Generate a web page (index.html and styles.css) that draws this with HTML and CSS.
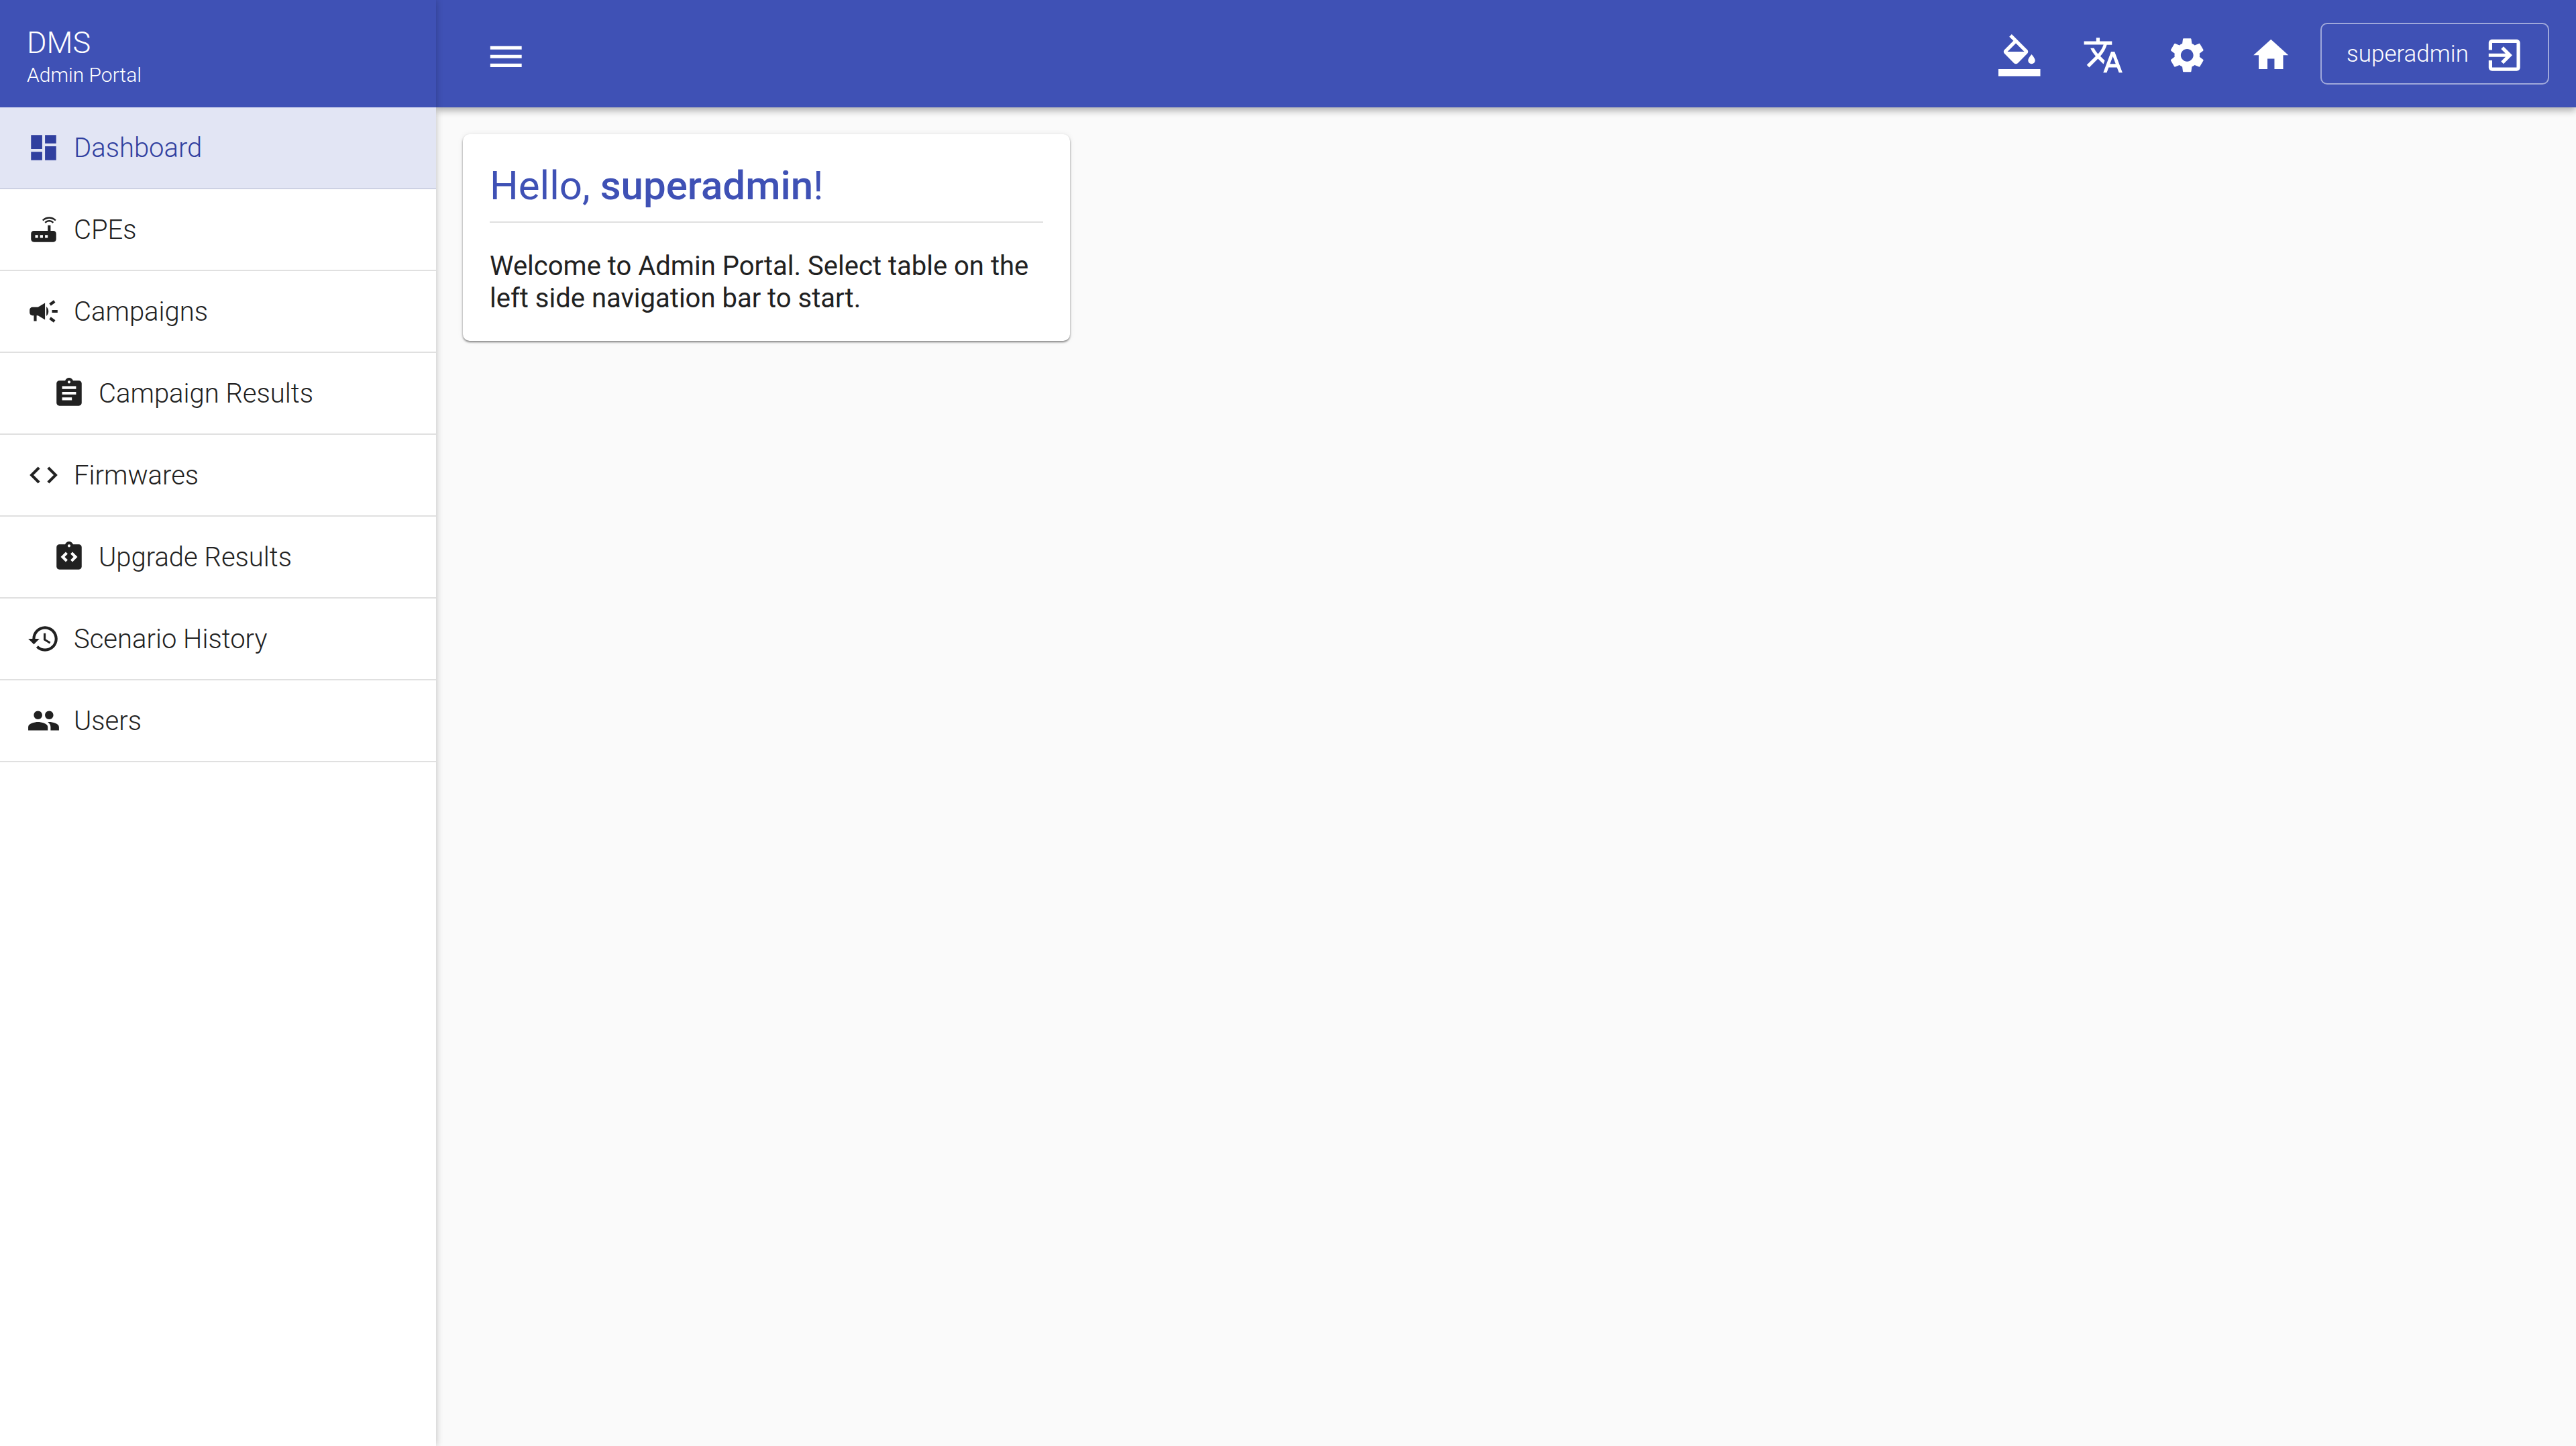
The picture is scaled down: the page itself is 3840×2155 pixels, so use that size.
FILE: index.html
```html
<!DOCTYPE html>
<html lang="en">
<head>
    <meta charset="UTF-8">
    <title>DMS Admin Portal</title>
    <link rel="stylesheet" href="styles.css">
</head>
<body>
    <aside class="sidebar">
        <div class="brand">
            <div class="brand-name">DMS</div>
            <div class="brand-sub">Admin Portal</div>
        </div>
        <nav class="nav">
            <a class="nav-item active">
                <svg class="nav-icon" viewBox="0 0 24 24"><path d="M3 13h8V3H3v10zm0 8h8v-6H3v6zm10 0h8V11h-8v10zm0-18v6h8V3h-8z"/></svg>
                <span>Dashboard</span>
            </a>
            <a class="nav-item">
                <svg class="nav-icon" viewBox="0 0 24 24"><path d="M20.2 5.9l.8-.8C19.6 3.7 17.8 3 16 3s-3.6.7-5 2.1l.8.8C13 4.8 14.5 4.2 16 4.2s3 .6 4.2 1.7zm-.9.8c-.9-.9-2.1-1.4-3.3-1.4s-2.4.5-3.3 1.4l.8.8c.7-.7 1.6-1 2.5-1 .9 0 1.8.3 2.5 1l.8-.8zM19 13h-2V9h-2v4H5c-1.1 0-2 .9-2 2v4c0 1.1.9 2 2 2h14c1.1 0 2-.9 2-2v-4c0-1.1-.9-2-2-2zM8 18H6v-2h2v2zm3.5 0h-2v-2h2v2zm3.5 0h-2v-2h2v2z"/></svg>
                <span>CPEs</span>
            </a>
            <a class="nav-item">
                <svg class="nav-icon" viewBox="0 0 24 24"><path d="M18 11v2h4v-2h-4zm-2 6.61c.96.71 2.21 1.65 3.2 2.39.4-.53.8-1.07 1.2-1.6-.99-.74-2.24-1.68-3.2-2.4-.4.54-.8 1.08-1.2 1.61zM20.4 5.6c-.4-.53-.8-1.07-1.2-1.6-.99.74-2.24 1.68-3.2 2.4.4.53.8 1.07 1.2 1.6.96-.72 2.21-1.65 3.2-2.4zM4 9c-1.1 0-2 .9-2 2v2c0 1.1.9 2 2 2h1v4h2v-4h1l5 3V6L8 9H4zm11.5 3c0-1.33-.58-2.53-1.5-3.35v6.69c.92-.81 1.5-2.01 1.5-3.34z"/></svg>
                <span>Campaigns</span>
            </a>
            <a class="nav-item sub">
                <svg class="nav-icon" viewBox="0 0 24 24"><path d="M19 3h-4.18C14.4 1.84 13.3 1 12 1c-1.3 0-2.4.84-2.82 2H5c-1.1 0-2 .9-2 2v14c0 1.1.9 2 2 2h14c1.1 0 2-.9 2-2V5c0-1.1-.9-2-2-2zm-7 0c.55 0 1 .45 1 1s-.45 1-1 1-1-.45-1-1 .45-1 1-1zm2 14H7v-2h7v2zm3-4H7v-2h10v2zm0-4H7V7h10v2z"/></svg>
                <span>Campaign Results</span>
            </a>
            <a class="nav-item">
                <svg class="nav-icon" viewBox="0 0 24 24"><path d="M9.4 16.6L4.8 12l4.6-4.6L8 6l-6 6 6 6 1.4-1.4zm5.2 0l4.6-4.6-4.6-4.6L16 6l6 6-6 6-1.4-1.4z"/></svg>
                <span>Firmwares</span>
            </a>
            <a class="nav-item sub">
                <svg class="nav-icon" viewBox="0 0 24 24"><path fill-rule="evenodd" d="M19 3h-4.18C14.4 1.84 13.3 1 12 1c-1.3 0-2.4.84-2.82 2H5c-1.1 0-2 .9-2 2v14c0 1.1.9 2 2 2h14c1.1 0 2-.9 2-2V5c0-1.1-.9-2-2-2zm-7 0c.55 0 1 .45 1 1s-.45 1-1 1-1-.45-1-1 .45-1 1-1zM11 14.17L9.59 15.59 6 12l3.59-3.59L11 9.83 8.83 12zM13 14.17l1.41 1.42L18 12l-3.59-3.59L13 9.83 15.17 12z"/></svg>
                <span>Upgrade Results</span>
            </a>
            <a class="nav-item">
                <svg class="nav-icon" viewBox="0 0 24 24"><path d="M13 3c-4.97 0-9 4.03-9 9H1l3.89 3.89.07.14L9 12H6c0-3.87 3.13-7 7-7s7 3.13 7 7-3.13 7-7 7c-1.93 0-3.68-.79-4.94-2.06l-1.42 1.42C8.27 19.99 10.51 21 13 21c4.97 0 9-4.03 9-9s-4.03-9-9-9zm-1 5v5l4.28 2.54.72-1.21-3.5-2.08V8H12z"/></svg>
                <span>Scenario History</span>
            </a>
            <a class="nav-item">
                <svg class="nav-icon" viewBox="0 0 24 24"><path d="M16 11c1.66 0 2.99-1.34 2.99-3S17.66 5 16 5c-1.66 0-3 1.34-3 3s1.34 3 3 3zm-8 0c1.66 0 2.99-1.34 2.99-3S9.66 5 8 5C6.34 5 5 6.34 5 8s1.34 3 3 3zm0 2c-2.33 0-7 1.17-7 3.5V19h14v-2.5c0-2.33-4.67-3.5-7-3.5zm8 0c-.29 0-.62.02-.97.05 1.16.84 1.97 1.97 1.97 3.45V19h6v-2.5c0-2.33-4.67-3.5-7-3.5z"/></svg>
                <span>Users</span>
            </a>
        </nav>
    </aside>

    <div class="main">
        <header class="topbar">
            <button class="icon-btn menu-btn">
                <svg viewBox="0 0 24 24"><path d="M3 18h18v-2H3v2zm0-5h18v-2H3v2zm0-7v2h18V6H3z"/></svg>
            </button>
            <div class="spacer"></div>
            <button class="icon-btn">
                <svg viewBox="0 0 24 24"><path d="M16.56 8.94L7.62 0 6.21 1.41l2.38 2.38-5.15 5.15c-.59.59-.59 1.54 0 2.12l5.5 5.5c.29.29.68.44 1.06.44s.77-.15 1.06-.44l5.5-5.5c.59-.58.59-1.53 0-2.12zM5.21 10L10 5.21 14.79 10H5.21zM19 11.5s-2 2.17-2 3.5c0 1.1.9 2 2 2s2-.9 2-2c0-1.33-2-3.5-2-3.5z"/><path d="M0 20h24v4H0z"/></svg>
            </button>
            <button class="icon-btn">
                <svg viewBox="0 0 24 24"><path d="M12.87 15.07l-2.54-2.51.03-.03c1.74-1.94 2.98-4.17 3.71-6.53H17V4h-7V2H8v2H1v1.99h11.17C11.5 7.92 10.44 9.75 9 11.35 8.07 10.32 7.3 9.19 6.69 8h-2c.73 1.63 1.73 3.17 2.98 4.56l-5.09 5.02L4 19l5-5 3.11 3.11.76-2.04zM18.5 10h-2L12 22h2l1.12-3h4.75L21 22h2l-4.5-12zm-2.62 7l1.62-4.33L19.12 17h-3.24z"/></svg>
            </button>
            <button class="icon-btn">
                <svg viewBox="0 0 24 24"><path d="M19.14 12.94c.04-.3.06-.61.06-.94 0-.32-.02-.64-.07-.94l2.03-1.58c.18-.14.23-.41.12-.61l-1.92-3.32c-.12-.22-.37-.29-.59-.22l-2.39.96c-.5-.38-1.03-.7-1.62-.94l-.36-2.54c-.04-.24-.24-.41-.48-.41h-3.84c-.24 0-.43.17-.47.41l-.36 2.54c-.59.24-1.13.57-1.62.94l-2.39-.96c-.22-.08-.47 0-.59.22L2.74 8.87c-.12.21-.08.47.12.61l2.03 1.58c-.05.3-.09.63-.09.94s.02.64.07.94l-2.03 1.58c-.18.14-.23.41-.12.61l1.92 3.32c.12.22.37.29.59.22l2.39-.96c.5.38 1.03.7 1.62.94l.36 2.54c.05.24.24.41.48.41h3.84c.24 0 .44-.17.47-.41l.36-2.54c.59-.24 1.13-.56 1.62-.94l2.39.96c.22.08.47 0 .59-.22l1.92-3.32c.12-.22.07-.47-.12-.61l-2.01-1.58zM12 15.6c-1.98 0-3.6-1.62-3.6-3.6s1.62-3.6 3.6-3.6 3.6 1.62 3.6 3.6-1.62 3.6-3.6 3.6z"/></svg>
            </button>
            <button class="icon-btn">
                <svg viewBox="0 0 24 24"><path d="M10 20v-6h4v6h5v-8h3L12 3 2 12h3v8z"/></svg>
            </button>
            <button class="user-btn">
                <span>superadmin</span>
                <svg viewBox="0 0 24 24"><path d="M10.09 15.59L11.5 17l5-5-5-5-1.41 1.41L12.67 11H3v2h9.67l-2.58 2.59zM19 3H5c-1.11 0-2 .9-2 2v4h2V5h14v14H5v-4H3v4c0 1.1.89 2 2 2h14c1.1 0 2-.9 2-2V5c0-1.1-.9-2-2-2z"/></svg>
            </button>
        </header>

        <main class="content">
            <section class="card">
                <h2 class="card-title">Hello, <strong>superadmin</strong>!</h2>
                <p class="card-text">Welcome to Admin Portal. Select table on the left side navigation bar to start.</p>
            </section>
        </main>
    </div>
</body>
</html>
```

FILE: styles.css
```css
html, body {
    height: 100%;
}
body {
    margin: 0;
    display: flex;
    overflow: hidden;
    font-family: Roboto, sans-serif;
    background-color: #fafafa;
    color: #212121;
}
.sidebar {
    position: relative;
    z-index: 2;
    flex: 0 0 650px;
    background-color: #fff;
    box-shadow: 0 0 10px rgba(0, 0, 0, 0.25);
}
.brand {
    height: 160px;
    box-sizing: border-box;
    padding: 40px 40px 0;
    background-color: #3f51b5;
    color: #fff;
    font-weight: 300;
}
.brand-name {
    font-size: 45px;
    line-height: 48px;
}
.brand-sub {
    font-size: 30px;
    line-height: 40px;
    margin-top: 4px;
}
.nav-item {
    display: flex;
    align-items: center;
    gap: 20px;
    height: 122px;
    box-sizing: border-box;
    padding-left: 40px;
    border-bottom: 2px solid #e0e0e0;
    font-size: 40px;
    font-weight: 300;
}
.nav-item.sub {
    padding-left: 78px;
    gap: 19px;
}
.nav-item.active {
    background-color: #e2e5f4;
    color: #303f9f;
    border-bottom-color: #cdd1e3;
}
.nav-icon {
    width: 50px;
    height: 50px;
    flex: none;
    fill: currentColor;
}
.main {
    flex: 1;
    min-width: 0;
}
.topbar {
    position: relative;
    z-index: 1;
    display: flex;
    align-items: center;
    height: 160px;
    padding: 0 40px 0 42px;
    background-color: #3f51b5;
    box-shadow: 0 5px 10px rgba(0, 0, 0, 0.3);
}
.spacer {
    flex: 1;
}
.icon-btn {
    width: 125px;
    height: 125px;
    padding: 0;
    margin-top: 5px;
    border: none;
    background: none;
    display: flex;
    align-items: center;
    justify-content: center;
}
.menu-btn {
    margin-top: 9px;
}
.icon-btn svg {
    width: 62.5px;
    height: 62.5px;
    fill: #fff;
}
.user-btn {
    display: flex;
    align-items: center;
    justify-content: space-between;
    width: 341px;
    height: 92px;
    margin-left: 11px;
    box-sizing: border-box;
    padding: 5px 34px 0 37px;
    border: 2.5px solid rgba(255, 255, 255, 0.5);
    border-radius: 10px;
    background: none;
    color: #fff;
    font-family: Roboto, sans-serif;
    font-size: 35px;
    font-weight: 300;
}
.user-btn span {
    margin-top: -4px;
}
.user-btn svg {
    width: 62.5px;
    height: 62.5px;
    fill: #fff;
}
.content {
    padding: 40px;
}
.card {
    width: 905px;
    box-sizing: border-box;
    padding: 40px;
    height: 308px;
    background-color: #fff;
    border-radius: 10px;
    box-shadow: 0 2px 3px rgba(0, 0, 0, 0.45), 0 0 8px rgba(0, 0, 0, 0.08);
}
.card-title {
    margin: 0;
    padding-top: 2px;
    padding-bottom: 18px;
    border-bottom: 2px solid #e0e0e0;
    font-size: 60px;
    line-height: 70px;
    font-weight: 400;
    color: #3f51b5;
}
.card-title strong {
    font-weight: 500;
}
.card-text {
    margin: 41px 0 0;
    font-size: 40px;
    line-height: 48px;
}
```
